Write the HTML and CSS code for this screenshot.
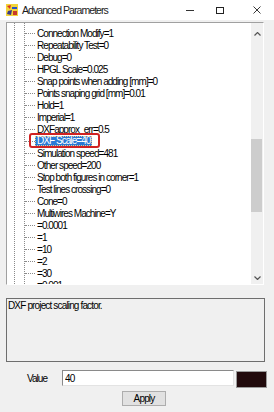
FILE: index.html
```html
<!DOCTYPE html>
<html lang="en">
<head>
    <meta charset="UTF-8">
    <title>Advanced Parameters</title>
    <link rel="stylesheet" href="styles.css">
</head>
<body>
    <div class="window">
        <div class="titlebar">
            <svg class="app-icon" width="12" height="12" viewBox="0 0 12 12">
                <rect x="0" y="0" width="12" height="12" fill="#f2d43a"/>
                <path d="M1 2 L5 1 L4 5 Z" fill="#d8302a"/>
                <path d="M6 3 h5 v2 h-5 z" fill="#2a52c8"/>
                <path d="M2 7 L6 6 L5 11 L1 10 Z" fill="#3a3a8a"/>
                <path d="M7 7 h4 v4 h-4 z" fill="#c83a2a"/>
            </svg>
            <span class="title">Advanced Parameters</span>
            <div class="controls">
                <span class="ctl min"></span>
                <span class="ctl max"></span>
                <svg class="ctl close" width="8" height="8" viewBox="0 0 8 8">
                    <path d="M0.5 0.5 L7.5 7.5 M7.5 0.5 L0.5 7.5" stroke="#222" stroke-width="0.9"/>
                </svg>
            </div>
        </div>

        <div class="tree">
            <div class="list">
                <div class="row"><span class="label">Connection Modify=1</span></div>
                <div class="row"><span class="label">Repeatability Test=0</span></div>
                <div class="row"><span class="label">Debug=0</span></div>
                <div class="row"><span class="label">HPGL Scale=0.025</span></div>
                <div class="row"><span class="label">Snap points when adding [mm]=0</span></div>
                <div class="row"><span class="label">Points snaping grid [mm]=0.01</span></div>
                <div class="row"><span class="label">Hold=1</span></div>
                <div class="row"><span class="label">Imperial=1</span></div>
                <div class="row"><span class="label">DXFapprox_err=0.5</span></div>
                <div class="row selected"><span class="label">DXF Scale=40</span></div>
                <div class="row"><span class="label">Simulation speed=481</span></div>
                <div class="row"><span class="label">Other speed=200</span></div>
                <div class="row"><span class="label">Stop both figures in corner=1</span></div>
                <div class="row"><span class="label">Test lines crossing=0</span></div>
                <div class="row"><span class="label">Cone=0</span></div>
                <div class="row"><span class="label">Multiwires Machine=Y</span></div>
                <div class="row"><span class="label">=0.0001</span></div>
                <div class="row"><span class="label">=1</span></div>
                <div class="row"><span class="label">=10</span></div>
                <div class="row"><span class="label">=2</span></div>
                <div class="row"><span class="label">=30</span></div>
                <div class="row"><span class="label">=0.001</span></div>
            </div>
            <div class="scrollbar">
                <svg class="arrow" width="7" height="4" viewBox="0 0 7 4"><path d="M0.5 3.5 L3.5 0.5 L6.5 3.5" fill="none" stroke="#555" stroke-width="1.2"/></svg>
                <div class="track"><div class="thumb"></div></div>
                <svg class="arrow" width="7" height="4" viewBox="0 0 7 4"><path d="M0.5 0.5 L3.5 3.5 L6.5 0.5" fill="none" stroke="#555" stroke-width="1.2"/></svg>
            </div>
        </div>

        <div class="desc">DXF project scaling factor.</div>

        <div class="value-row">
            <label class="value-label" for="value">Value</label>
            <input class="value-input" id="value" type="text" value="40">
            <div class="swatch"></div>
        </div>

        <div class="apply-row">
            <button class="apply">Apply</button>
        </div>
    </div>
</body>
</html>
```

FILE: styles.css
```css
* {
    margin: 0;
    padding: 0;
    box-sizing: border-box;
}
body {
    background: #f0f0f0;
    font-family: 'Liberation Sans', Arial, sans-serif;
    font-size: 10px;
    letter-spacing: -0.95px;
    color: #000;
}
.window {
    width: 274px;
    height: 412px;
    background: #f0f0f0;
    overflow: hidden;
}
.titlebar {
    height: 20px;
    background: #fff;
    display: flex;
    align-items: center;
    padding-left: 6px;
}
.app-icon {
    margin-right: 4px;
}
.title {
    font-size: 10.5px;
    letter-spacing: -0.95px;
    color: #1a1a1a;
}
.controls {
    margin-left: auto;
    display: flex;
    align-items: center;
    height: 20px;
}
.ctl {
    display: block;
}
.min {
    width: 8px;
    height: 1px;
    background: #333;
    margin-right: 22px;
}
.max {
    width: 8px;
    height: 7px;
    border: 1px solid #222;
    margin-right: 29px;
}
.close {
    margin-right: 13px;
}
.tree {
    margin: 2px 10px 0 6px;
    height: 263px;
    border: 1px solid #a0a0a0;
    border-right-color: #fff;
    border-bottom-color: #fff;
    background: #fff;
    display: flex;
}
.list {
    flex: 1;
    padding-top: 4px;
    overflow: hidden;
    background-image: linear-gradient(#8a8a8a 50%, transparent 50%), linear-gradient(#8a8a8a 50%, transparent 50%);
    background-size: 1px 2px;
    background-position: 7px 0, 17px 0;
    background-repeat: repeat-y;
}
.row {
    height: 12px;
    display: flex;
    align-items: center;
    padding-left: 18px;
    white-space: nowrap;
}
.row::before {
    content: "";
    flex: none;
    width: 10px;
    height: 0;
    border-top: 1px dotted #8a8a8a;
}
.label {
    display: block;
    padding: 0 2px;
    height: 11px;
    line-height: 11px;
}
.selected .label {
    position: relative;
    height: 10px;
    line-height: 10px;
    padding: 0 2px;
    background: #2a7ad6;
    color: #fff;
    outline: 1px dotted #e8c890;
    outline-offset: -1px;
}
.selected .label::after {
    content: "";
    position: absolute;
    left: -6px;
    right: -8px;
    top: -3px;
    bottom: -2px;
    border: 2px solid #d12222;
    border-radius: 3px;
}
.scrollbar {
    width: 12px;
    background: #f0f0f0;
    display: flex;
    flex-direction: column;
    align-items: center;
}
.arrow {
    margin: 9px 0;
}
.scrollbar .arrow:last-child {
    margin-bottom: 4px;
}
.track {
    flex: 1;
    width: 100%;
    padding-top: 94px;
}
.thumb {
    width: 11px;
    height: 73px;
    background: #cdcdcd;
}
.desc {
    margin: 13px 9px 0 6px;
    height: 64px;
    border: 1px solid #6e6e6e;
    padding: 1px 1px;
    line-height: 11px;
    letter-spacing: -0.85px;
}
.value-row {
    margin-top: 8px;
    display: grid;
    grid-template-columns: 60px 172px 31px;
    column-gap: 2px;
    align-items: start;
}
.value-label {
    padding-left: 27px;
    padding-top: 3px;
}
.value-input {
    height: 16px;
    border: 1px solid #8a8a8a;
    border-right-color: #e3e3e3;
    border-bottom-color: #e3e3e3;
    background: #fff;
    font-family: 'Liberation Sans', Arial, sans-serif;
    font-size: 10px;
    letter-spacing: -0.85px;
    padding-left: 2px;
    outline: none;
}
.swatch {
    margin-top: 1px;
    height: 17px;
    background: #210a0c;
    border: 1px solid #9a9a9a;
}
.apply-row {
    margin-top: 3px;
    padding-left: 122px;
}
.apply {
    width: 44px;
    height: 15px;
    background: #e1e1e1;
    border: 1px solid #adadad;
    font-family: 'Liberation Sans', Arial, sans-serif;
    font-size: 10px;
    letter-spacing: -0.85px;
    color: #000;
}
```
